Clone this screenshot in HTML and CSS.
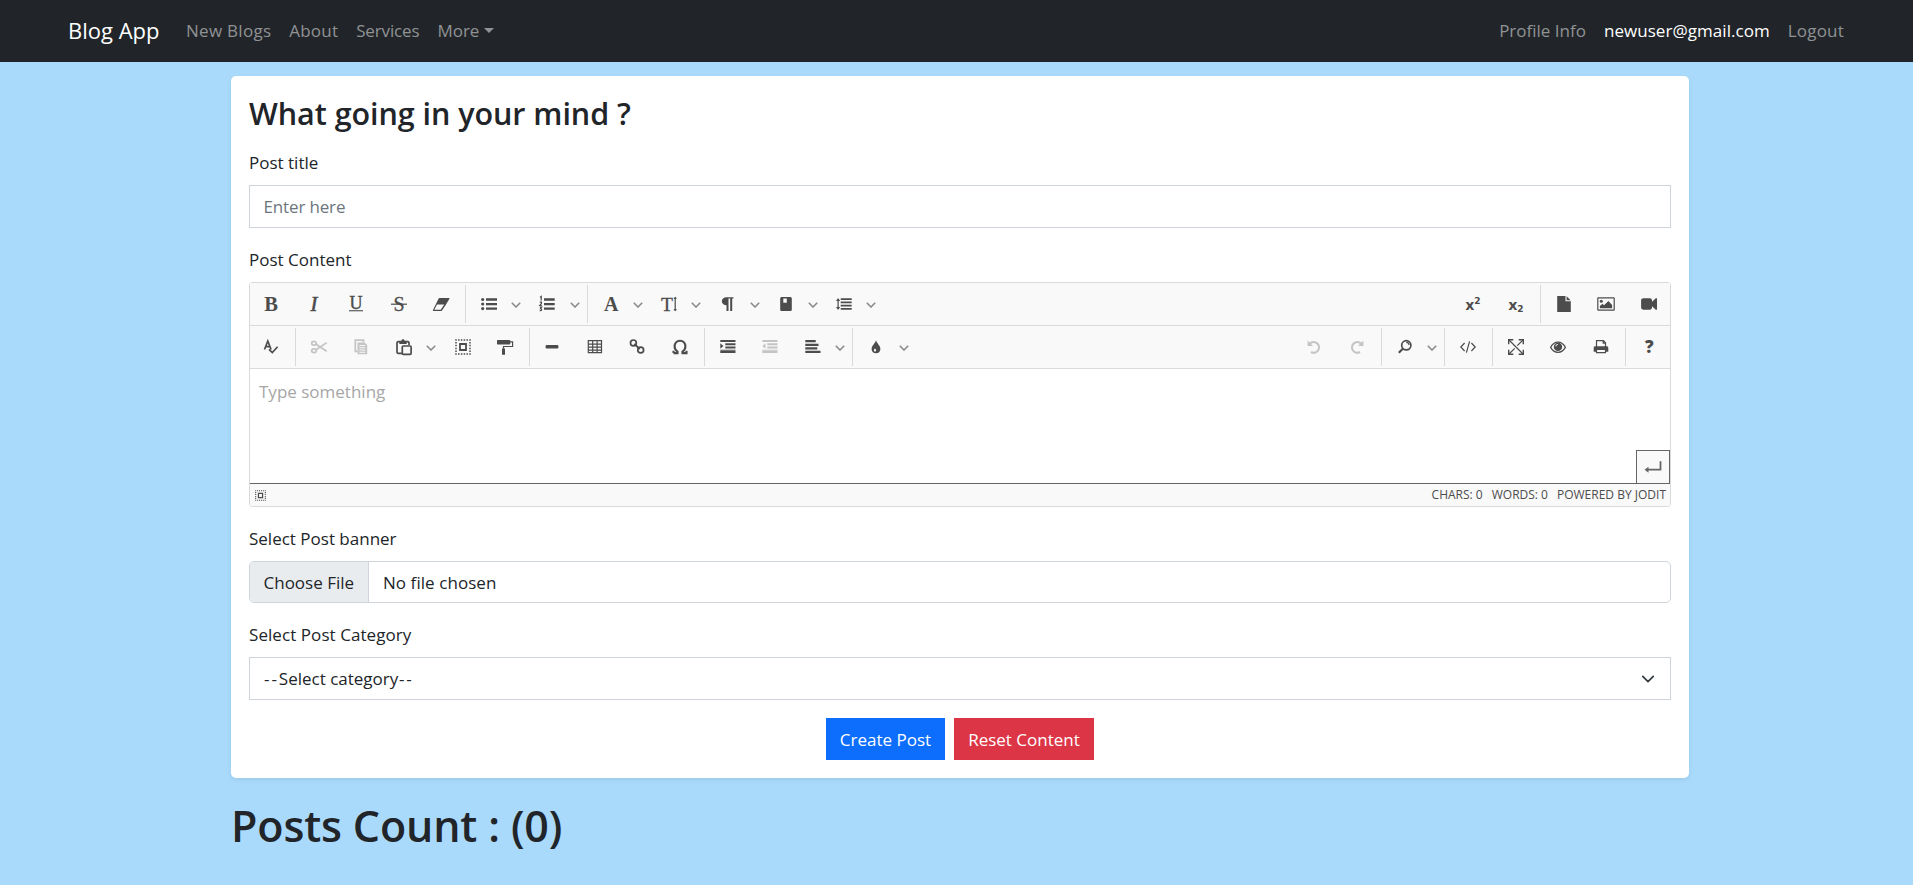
FILE: index.html
```html
<!DOCTYPE html>
<html lang="en">
<head>
<meta charset="utf-8">
<title>Blog App</title>
<link rel="stylesheet" href="styles.css">
</head>
<body>
<nav class="navbar">
  <a class="brand">Blog App</a>
  <div class="nav-links">
    <a class="ls-3">New Blogs</a><a class="ls-2">About</a><a class="ls-tight">Services</a><a class="more"><span>More</span><i class="caret"></i></a>
  </div>
  <div class="nav-links nav-user">
    <a>Profile Info</a><a class="active">newuser@gmail.com</a><a class="ls-2">Logout</a>
  </div>
</nav>

<main class="page">
  <section class="card">
    <h3 class="card-title">What going in your mind ?</h3>

    <label class="label">Post title</label>
    <div class="field placeholder ls-tight">Enter here</div>

    <label class="label">Post Content</label>
    <div class="editor">
      <div class="toolbar">
        <span class="btn"><svg class="ico" viewBox="0 0 16 16"><text class="serif bold" x="8" y="15" font-size="20.5" text-anchor="middle">B</text></svg></span>
        <span class="btn"><svg class="ico" viewBox="0 0 16 16"><text class="serif italic" x="8" y="15" font-size="20.5" text-anchor="middle" stroke="#4c4c4c" stroke-width=".6">I</text></svg></span>
        <span class="btn"><svg class="ico" viewBox="0 0 16 16"><text class="serif" x="8" y="12.6" font-size="18" text-anchor="middle" stroke="#4c4c4c" stroke-width=".4">U</text><path d="M1 14.200h14v1.100H1z"/></svg></span>
        <span class="btn"><svg class="ico" viewBox="0 0 16 16"><text class="serif" x="8" y="14.600" font-size="20" text-anchor="middle" stroke="#4c4c4c" stroke-width=".3">S</text><path d="M0 7.600h16v1.200H0z"/></svg></span>
        <span class="btn"><svg class="ico" viewBox="0 0 16 16"><path d="M6.600 2h9c.8 0 1.100.5.700 1.100L12.700 9 9 14.400c-.3.4-.6.6-1.100.6H.6c-.6 0-.9-.5-.6-1.100L5.500 2.700c.3-.4.600-.7 1.100-.7zM4 8.500 1.300 13.800h6.400l3.500-5.300z" fill-rule="evenodd"/></svg></span>
        <i class="sep"></i>
        <span class="btn drop"><svg class="ico" viewBox="0 0 16 16"><circle cx="1.700" cy="3.500" r="1.600"/><circle cx="1.700" cy="8" r="1.600"/><circle cx="1.700" cy="12.600" r="1.600"/><path d="M5 2.300h11v2.400H5zM5 6.900h11v2.300H5zM5 11.400h11v2.400H5z"/></svg><svg class="chev" viewBox="0 0 10 6"><path id="chev" d="M.8.8 5 5 9.200.8"/></svg></span>
        <span class="btn drop"><svg class="ico" viewBox="0 0 16 16"><path d="M1 1.200 2.200.4v4M.8 6.200h1.600v1.400L.8 9.500h2M.8 11.200h1.900L1.600 12.700c1.600 0 1.400 2.300-.9 1.900" class="line"/><path d="M5 2.300h10.700v2.400H5zM5 6.900h10.700v2.300H5zM5 11.400h10.700v2.400H5z"/></svg><svg class="chev" viewBox="0 0 10 6"><use href="#chev"/></svg></span>
        <i class="sep"></i>
        <span class="btn drop"><svg class="ico" viewBox="0 0 16 16"><text class="serif bold" x="8.300" y="15" font-size="20" text-anchor="middle">A</text></svg><svg class="chev" viewBox="0 0 10 6"><use href="#chev"/></svg></span>
        <span class="btn drop"><svg class="ico" viewBox="0 0 16 16"><text class="serif" x="6" y="15" font-size="19.500" text-anchor="middle" stroke="#4c4c4c" stroke-width=".3">T</text><path d="M14.200 1.500v13M13 2.700l1.200-1.200 1.200 1.200M13 13.300l1.200 1.200 1.200-1.200" class="line"/></svg><svg class="chev" viewBox="0 0 10 6"><use href="#chev"/></svg></span>
        <span class="btn drop"><svg class="ico" viewBox="0 0 16 16"><path d="M14.500 1.200v1.300h-1.300V15h-2V2.500H9.500V15h-2V9.300C4.700 9.300 2.800 7.500 2.800 5.300S4.700 1.200 7.500 1.200z"/></svg><svg class="chev" viewBox="0 0 10 6"><use href="#chev"/></svg></span>
        <span class="btn drop"><svg class="ico shift" viewBox="0 0 16 16"><path fill-rule="evenodd" d="M3.800 1h8.400c1 0 1.600.6 1.600 1.600v10.900c0 1-.6 1.600-1.600 1.600H3.800c-1 0-1.600-.6-1.600-1.600V2.600C2.200 1.600 2.800 1 3.800 1zM5.300 2.600v4.200h3.500V2.600z"/></svg><svg class="chev" viewBox="0 0 10 6"><use href="#chev"/></svg></span>
        <span class="btn drop"><svg class="ico" viewBox="0 0 16 16"><path d="M2.100 2 4.200 5H2.700v6h1.500l-2.100 3L0 11h1.500V5H0zM4.700 2.300h11v1.800h-11zM4.700 5.500h11v1.800h-11zM4.700 8.700h11v1.800h-11zM4.700 11.900h11v1.800h-11z"/></svg><svg class="chev" viewBox="0 0 10 6"><use href="#chev"/></svg></span>
        <span class="grow"></span>
        <span class="btn"><svg class="ico" viewBox="0 0 16 16"><text class="sans" x=".5" y="14" font-size="15">x</text><text class="digit" x="9.300" y="7.500" font-size="9">2</text></svg></span>
        <span class="btn"><svg class="ico" viewBox="0 0 16 16"><text class="sans" x=".5" y="14" font-size="15">x</text><text class="digit" x="9.300" y="15.500" font-size="9">2</text></svg></span>
        <i class="sep"></i>
        <span class="btn"><svg class="ico" viewBox="0 0 16 16"><path d="M1.200 0h8.300v5.200h5.300V16H1.200zM10.600.2l4 4h-4z"/></svg></span>
        <span class="btn"><svg class="ico wide" viewBox="0 0 18 16"><path fill-rule="evenodd" d="M1.500 1.200h15c.8 0 1.300.5 1.300 1.300v11c0 .8-.5 1.300-1.300 1.300h-15c-.8 0-1.300-.5-1.300-1.300v-11c0-.8.5-1.300 1.300-1.300zM1.400 2.400v11.200h15.200V2.400zM2.900 12.300V10l2.500-2.300L7 9.200l4.400-4.100 3.700 3.800v3.400z"/><circle cx="4.300" cy="5.200" r="1.500"/></svg></span>
        <span class="btn"><svg class="ico" viewBox="0 0 16 16"><path d="M2.500 2.200h6.300c1.300 0 2.200.9 2.200 2.200v1.300l3.800-3.500H16v11.600h-1.200L11 10.300v1.300c0 1.300-.9 2.200-2.200 2.200H2.500C1.200 13.800.1 12.900.1 11.600V4.400c0-1.300 1.100-2.200 2.400-2.200z"/></svg></span>
      </div>
      <div class="toolbar">
        <span class="btn"><svg class="ico" viewBox="0 0 16 16"><path d="M1.500 10.500 4.800 2l3.300 8.500M2.700 7.700h4.200" class="line thick"/><path d="m6 10.300 3.300 3.200 5.300-5.800" class="line thick"/></svg></span>
        <i class="sep"></i>
        <span class="btn off"><svg class="ico" viewBox="0 0 16 16"><ellipse cx="3" cy="4.300" rx="2.300" ry="1.900" class="line thick"/><ellipse cx="3" cy="11.700" rx="2.300" ry="1.900" class="line thick"/><path d="M5 5.300 15.700 12.200M5 10.700 15.700 3.600" class="line thick"/></svg></span>
        <span class="btn off"><svg class="ico" viewBox="0 0 16 16"><path d="M4.500 12.300H2.300V1.200h8.200v2" class="line thick"/><path fill-rule="evenodd" d="M4.500 3.400h7l2.700 2.700v9.200H4.500zM6.300 6v1h5.900V6zM6.300 8.300v1h5.900v-1zM6.300 10.500v1h5.900v-1zM6.300 12.700v1h5.900v-1z"/></svg></span>
        <span class="btn drop"><svg class="ico" viewBox="0 0 16 16"><path d="M6 14.300H2.200c-.8 0-1.200-.4-1.200-1.200V3.900c0-.8.400-1.200 1.200-1.200h9.600c.8 0 1.200.4 1.200 1.200v2M7.200 7h7c.6 0 .9.300.9.900v6.500c0 .6-.3.900-.9.900h-7c-.6 0-.9-.3-.9-.9V7.900c0-.6.300-.9.900-.9z" class="line thick"/><path d="M3.300 5V3l2-1.100C5.500.8 6.200.2 7 .2s1.500.6 1.700 1.700l2 1.100v2z"/></svg><svg class="chev" viewBox="0 0 10 6"><use href="#chev"/></svg></span>
        <span class="btn"><svg class="ico shift" viewBox="0 0 16 16"><use href="#dots"/></svg></span>
        <span class="btn"><svg class="ico" viewBox="0 0 16 16"><path d="M.6 1h12c.4 0 .7.300.7.700v3c0 .4-.3.700-.7.700H.6c-.4 0-.6-.3-.6-.7v-3C0 1.300.2 1 .6 1zM5 9.500h3v6.300H5z"/><path d="M13 2.900h2.600v4.600H6.500v2.300" class="line"/></svg></span>
        <i class="sep"></i>
        <span class="btn"><svg class="ico" viewBox="0 0 16 16"><rect x="1.600" y="6.100" width="12.800" height="3.400" rx="1"/></svg></span>
        <span class="btn"><svg class="ico shift" viewBox="0 0 16 16"><path d="M1.300 1.700h13.200v12H1.300zM1.300 5.200h13.200M1.300 8.200h13.200M1.300 11.100h13.200M5.700 1.700v12M10.100 1.700v12" class="line"/></svg></span>
        <span class="btn"><svg class="ico" viewBox="0 0 16 16"><circle cx="4.400" cy="3.900" r="2.900" class="line thick"/><circle cx="11.700" cy="11" r="2.900" class="line thick"/><path d="m5.300 5 5.500 5" class="line thick"/></svg></span>
        <span class="btn"><svg class="ico shift" viewBox="0 0 16 16"><path d="M1.500 14.100h4v-1.500C3.700 11.500 2.600 9.800 2.600 7.300c0-3.200 2-5.500 5.400-5.500s5.400 2.300 5.400 5.500c0 2.500-1.100 4.200-2.900 5.300v1.500h4v-2.300M1.500 14.100v-2.300" class="line xthick"/></svg></span>
        <i class="sep"></i>
        <span class="btn"><svg class="ico shift" viewBox="0 0 16 16"><path d="M.3 1h15.200v2H.3zM5.300 4.300h10.200v2H5.300zM5.300 7.500h10.200v2H5.300zM.3 10.800h15.200v.9H.3zM.3 12h15.200v2H.3zM.3 4.300v5.500l3.200-2.700z"/></svg></span>
        <span class="btn off"><svg class="ico" viewBox="0 0 16 16"><path d="M.3 1h15.200v2H.3zM5.300 4.300h10.200v2H5.300zM5.300 7.500h10.200v2H5.300zM.3 10.800h15.200v.9H.3zM.3 12h15.200v2H.3zM3.500 4.300v5.500L.3 7.100z"/></svg></span>
        <span class="btn drop"><svg class="ico shift" viewBox="0 0 16 16"><path d="M.3 1h10.400v2.200H.3zM.3 4.700h13.200v2.200H.3zM.3 8.200h12v2.200H.3zM.3 11.700h15.200v2.200H.3z"/></svg><svg class="chev" viewBox="0 0 10 6"><use href="#chev"/></svg></span>
        <i class="sep"></i>
        <span class="btn drop"><svg class="ico" viewBox="0 0 16 16"><path fill-rule="evenodd" d="M8 1.200c.5 2.800 4.400 5.300 4.400 8.700 0 2.500-1.900 4.400-4.400 4.400s-4.400-1.900-4.400-4.400C3.600 6.500 7.500 4 8 1.200zM7 9.300c-.6 1-1.100 1.400-1.100 2.100 0 .7.500 1.100 1.100 1.100s1.100-.4 1.100-1.100c0-.7-.5-1.100-1.100-2.100z"/></svg><svg class="chev" viewBox="0 0 10 6"><use href="#chev"/></svg></span>
        <span class="grow"></span>
        <span class="btn off"><svg class="ico" viewBox="0 0 16 16"><path d="M4 4.600A5.300 5.300 0 1 1 5 13" class="line xthick"/><path d="M1.600 1.500v5.400H7z"/></svg></span>
        <span class="btn off"><svg class="ico" viewBox="0 0 16 16"><path d="M12 4.600A5.300 5.300 0 1 0 11 13" class="line xthick"/><path d="M14.400 1.500v5.400H9z"/></svg></span>
        <i class="sep"></i>
        <span class="btn drop"><svg class="ico" viewBox="0 0 16 16"><circle cx="9.300" cy="6.300" r="4.600" class="line thick"/><path d="M9.200 3.300c1.700 0 2.800 1.100 2.900 2.700" class="line"/><path d="m5.800 9.800-4 4" class="line xthick"/></svg><svg class="chev" viewBox="0 0 10 6"><use href="#chev"/></svg></span>
        <i class="sep"></i>
        <span class="btn"><svg class="ico" viewBox="0 0 16 16"><path d="M4.600 4 .8 8l3.800 4M11.400 4l3.800 4-3.800 4M9.600 2.400 6.400 13.600" class="line"/></svg></span>
        <i class="sep"></i>
        <span class="btn"><svg class="ico" viewBox="0 0 16 16"><path d="M.7 5.300V.7h4.600M10.700.7h4.600v4.600M15.300 10.700v4.600h-4.600M5.300 15.300H.7v-4.600" class="line mid"/><path d="m1 1 14 14M15 1 9.300 6.700M6.700 9.300 1 15" class="line"/></svg></span>
        <span class="btn"><svg class="ico" viewBox="0 0 16 16"><path d="M.6 8.400C2.400 5 5 3.200 8 3.200s5.600 1.800 7.400 5.200c-1.800 3.200-4.400 4.900-7.400 4.900S2.400 11.600.6 8.400z" class="line"/><path fill-rule="evenodd" d="M8 3.700a4.200 4.200 0 1 1 0 8.400 4.200 4.200 0 0 1 0-8.400zm-.1 1.400c-1.500 0-2.500 1-2.500 2.500h.8c0-1 .7-1.700 1.700-1.700z"/></svg></span>
        <span class="btn"><svg class="ico" viewBox="0 0 16 16"><path d="M3.500 8V1.700h7l2 2V8M10.200 2v2.200h2.200M3.500 11v2.700h9V11" class="line"/><path fill-rule="evenodd" d="M2.300 7.300h11.400c1 0 1.600.7 1.600 1.600v3.900h-2.800v-1.700h-9v1.700H.7V8.900c0-.9.600-1.600 1.600-1.600z"/></svg></span>
        <i class="sep"></i>
        <span class="btn"><svg class="ico" viewBox="0 0 16 16"><text class="sans heavy" x="8.300" y="14" font-size="17" text-anchor="middle">?</text></svg></span>
      </div>
      <div class="workplace">Type something
        <span class="enter"><svg viewBox="0 0 18 12"><path d="M16.500.3v8.400H3" fill="none" stroke="#656565" stroke-width="1.800"/><path d="M.5 8.700 4.500 5.700v6z" fill="#656565"/></svg></span>
      </div>
      <div class="statusbar">
        <svg class="status-ico" viewBox="0 0 16 16"><g id="dots"><path d="M1 1h14v14H1z" fill="none" stroke="#4c4c4c" stroke-width="1.500" stroke-dasharray="1.500 1.300" stroke-dashoffset=".75"/><path d="M5 5h6v6H5z" fill="none" stroke="#4c4c4c" stroke-width="1.800"/></g></svg>
        <span class="grow"></span>
        <span>CHARS: 0</span><span>WORDS: 0</span><span>POWERED BY JODIT</span>
      </div>
    </div>

    <label class="label">Select Post banner</label>
    <div class="file"><span class="file-btn">Choose File</span><span class="file-name">No file chosen</span></div>

    <label class="label ls-1">Select Post Category</label>
    <div class="field select"><span><span class="dash">--</span>Select category<span class="dash">--</span></span><svg class="select-chev" viewBox="0 0 16 16"><path d="m2 5 6 6 6-6" fill="none" stroke="#343a40" stroke-width="2" stroke-linecap="round" stroke-linejoin="round"/></svg></div>

    <div class="actions"><button class="primary">Create Post</button><button class="danger">Reset Content</button></div>
  </section>
  <h1 class="count">Posts Count : (0)</h1>
</main>
</body>
</html>
```
FILE: styles.css
```css
* { box-sizing: border-box; }
body { margin: 0; min-height: 885px; background: #a9dafc; color: #212529; font: 400 17px/27px "Open Sans", "Noto Sans", sans-serif; }
.navbar { display: flex; align-items: center; height: 62px; padding: 0 69px 2px 68px; background: #212529; color: #fff; }
.brand { font-size: 22px; margin-right: 26.500px; }
.nav-links { display: flex; gap: 18px; color: #909294; }
.nav-user { margin-left: auto; }
.active { color: #fff; letter-spacing: .05px; }
.more { display: flex; align-items: center; gap: 5px; }
.caret { border: 5px solid transparent; border-top-color: currentColor; border-bottom: 0; }
.ls-1 { letter-spacing: .07px; }
.ls-2 { letter-spacing: .2px; }
.ls-3 { letter-spacing: .28px; }
.ls-tight { letter-spacing: -.15px; }
.page { width: 1458px; margin: 14px 0 0 231px; }
.card { height: 702px; padding: 18px; background: #fff; border-radius: 5px; box-shadow: 0 2px 4px rgba(0,0,0,.075); }
.card-title { margin: 0 0 16px; height: 39px; font-size: 30.500px; line-height: 38px; font-weight: 600; letter-spacing: -.05px; }
.label { display: block; height: 27px; margin-bottom: 9px; }
.field { display: flex; align-items: center; height: 43px; padding: 0 13.500px; margin-bottom: 18px; border: 1px solid #ced4da; }
.placeholder { color: #6c757d; }
.editor { height: 225px; margin-bottom: 18px; border: 1px solid #dadada; border-radius: 3px; }
.toolbar { display: flex; align-items: center; height: 43px; background: #f9f9f9; border-bottom: 1px solid #dadada; }
.btn { display: flex; align-items: center; width: 42.500px; height: 42px; padding-left: 13px; }
.drop { width: 58.250px; }
.off { opacity: .3; }
.ico { flex: none; width: 16px; height: 16px; fill: #4c4c4c; overflow: visible; }
.wide { width: 18px; margin-left: -1px; }
.shift { margin: 0 -.5px 0 .5px; }
.chev { flex: none; width: 10px; height: 6px; margin: 2px 0 0 14.600px; fill: none; stroke: #8b8b8b; stroke-width: 1.600; }
.line { fill: none; stroke: #4c4c4c; stroke-width: 1.200; }
.mid { stroke-width: 1.400; }
.thick { stroke-width: 1.700; }
.xthick { stroke-width: 2.100; }
.serif { font-family: "Liberation Serif", serif; }
.sans { font-family: "Open Sans", sans-serif; font-weight: 700; }
.digit { font-family: "DejaVu Sans", sans-serif; font-weight: 700; }
.heavy { font-weight: 800; }
.bold { font-weight: 700; }
.italic { font-style: italic; }
.sep { width: 1px; height: 38px; margin: 0 1.750px 0 2.500px; background: #dadada; }
.grow { flex: 1; }
.workplace { position: relative; height: 115px; padding: 9px; color: #a6a6a6; border-bottom: 1px solid #656565; }
.enter { position: absolute; right: 0; bottom: -1px; display: flex; align-items: center; justify-content: center; width: 34px; height: 34px; background: #f9f9f9; border: 1px solid #656565; }
.enter svg { width: 18px; height: 12px; }
.statusbar { display: flex; align-items: center; gap: 9px; height: 22px; padding: 0 4px 0 5px; background: #f9f9f9; font-size: 12px; line-height: 22px; color: #4c4c4c; }
.status-ico { width: 11px; height: 11px; }
.file { display: flex; align-items: center; height: 42px; margin-bottom: 18px; border: 1px solid #ced4da; border-radius: 5px; overflow: hidden; }
.file-btn { display: flex; align-items: center; width: 119px; height: 40px; padding-left: 13.500px; background: #e9ecef; border-right: 1px solid #ced4da; }
.file-name { margin-left: 14px; letter-spacing: .06px; }
.select { justify-content: space-between; }
.dash { letter-spacing: 1.900px; margin-left: .6px; }
.select-chev { width: 14px; height: 14px; margin-right: 2px; }
.actions { display: flex; justify-content: center; gap: 9px; }
.actions button { height: 42px; width: 119px; padding: 0; border: 0; color: #fff; font: inherit; }
.actions .primary { background: #0d6efd; }
.actions .danger { width: 140px; background: #dc3545; }
.count { margin: 21px 0 0; font-size: 43px; line-height: 54px; font-weight: 600; letter-spacing: -.15px; }
```
